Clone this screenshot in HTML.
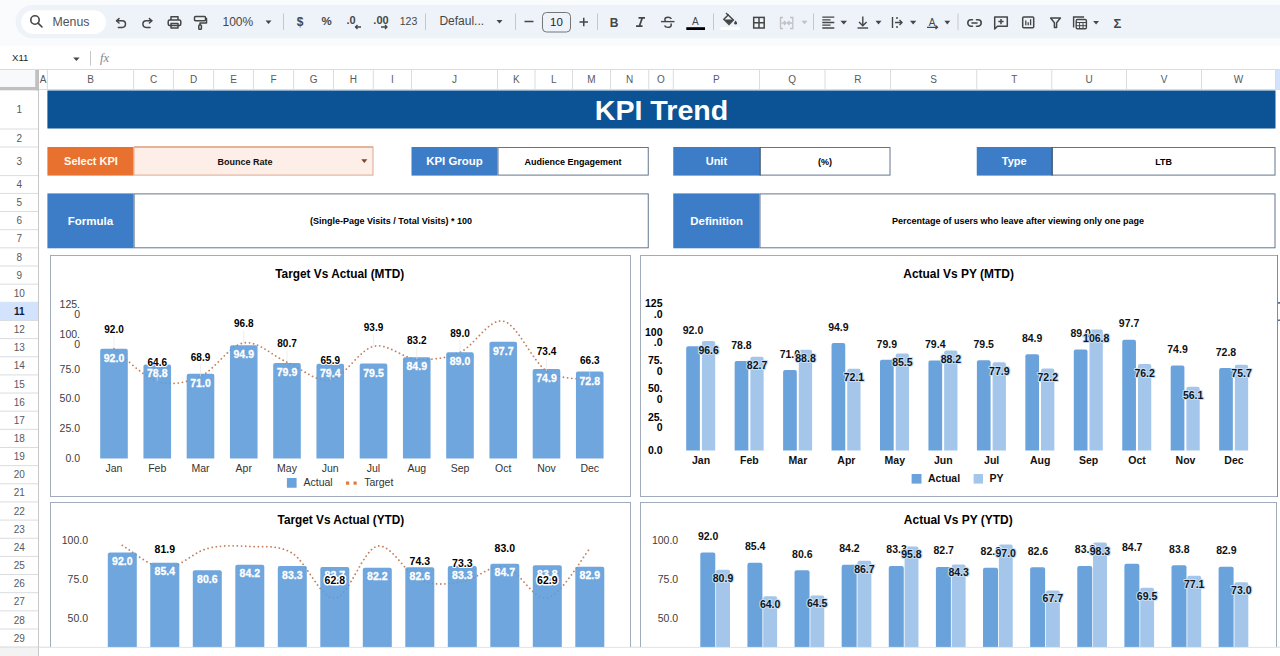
<!DOCTYPE html>
<html><head><meta charset="utf-8"><title>KPI Trend</title>
<style>
html,body{margin:0;padding:0;width:1280px;height:656px;overflow:hidden;background:#ffffff;}
svg{display:block;font-family:"Liberation Sans", sans-serif;}
</style></head><body>
<svg width="1280" height="656" viewBox="0 0 1280 656">
<rect x="0.00" y="0.00" width="1280.00" height="46.00" fill="#f9fbfd" />
<rect x="15.6" y="5" width="1300" height="33.2" rx="16.6" fill="#eef2f9"/>
<rect x="21.2" y="10.3" width="84.8" height="23.7" rx="11.85" fill="#ffffff"/>
<g fill="none" stroke="#444746" stroke-width="1.6"><circle cx="35" cy="20" r="4.2"/><line x1="38.1" y1="23.1" x2="42" y2="27" stroke-linecap="round"/></g>
<text x="52.50" y="26.00" font-size="12.3" fill="#4f5254" font-weight="normal" text-anchor="start" >Menus</text>
<g fill="none" stroke="#444746" stroke-width="1.5" stroke-linecap="round" stroke-linejoin="round"><path d="M116.6 20.8 h5.6 a3.3 3.3 0 0 1 0 6.6 h-3.8"/><path d="M119 18.6 l-2.4 2.2 l2.4 2.2"/><path d="M151.8 20.8 h-5.6 a3.3 3.3 0 0 0 0 6.6 h3.8"/><path d="M149.4 18.6 l2.4 2.2 l-2.4 2.2"/></g>
<g fill="none" stroke="#444746" stroke-width="1.5" stroke-linejoin="round"><path d="M171 20 v-3.2 h7 v3.2"/><rect x="168.2" y="20" width="12.6" height="5.6" rx="1.5"/><rect x="171" y="23.5" width="7" height="4.6"/></g>
<g fill="none" stroke="#444746" stroke-width="1.5" stroke-linejoin="round"><rect x="194.5" y="16.5" width="11" height="4.2" rx="1"/><path d="M205.5 18.6 h1 v4.3 h-6.5 v2.2"/><rect x="198.8" y="25" width="2.6" height="4.3" rx="0.8"/></g>
<text x="222.50" y="26.40" font-size="12" fill="#444746" font-weight="normal" text-anchor="start" >100%</text>
<path d="M265.5 20.5 L271.5 20.5 L268.5 24 Z" fill="#444746"/>
<line x1="283.50" y1="13.50" x2="283.50" y2="30.00" stroke="#c7c7c7" stroke-width="1" />
<text x="300.00" y="25.60" font-size="12" fill="#444746" font-weight="bold" text-anchor="middle" >$</text>
<text x="326.50" y="25.20" font-size="11.5" fill="#444746" font-weight="bold" text-anchor="middle" >%</text>
<text x="351.00" y="24.20" font-size="11" fill="#444746" font-weight="bold" text-anchor="middle" >.0</text>
<g stroke="#444746" stroke-width="1.3" fill="none"><path d="M361 27 h-6 M357.5 25 l-2 2 l2 2"/></g>
<text x="381.00" y="24.20" font-size="11" fill="#444746" font-weight="bold" text-anchor="middle" >.00</text>
<g stroke="#444746" stroke-width="1.3" fill="none"><path d="M381 27 h6 M385 25 l2 2 l-2 2"/></g>
<text x="408.50" y="25.20" font-size="10.5" fill="#444746" font-weight="normal" text-anchor="middle" >123</text>
<line x1="425.50" y1="13.50" x2="425.50" y2="30.00" stroke="#c7c7c7" stroke-width="1" />
<text x="439.40" y="25.30" font-size="12" fill="#444746" font-weight="normal" text-anchor="start" >Defaul...</text>
<path d="M496.5 20 L502.5 20 L499.5 23.5 Z" fill="#444746"/>
<line x1="515.50" y1="13.50" x2="515.50" y2="30.00" stroke="#c7c7c7" stroke-width="1" />
<line x1="524.50" y1="21.50" x2="533.50" y2="21.50" stroke="#444746" stroke-width="1.5" />
<rect x="542.5" y="12.5" width="28" height="19.5" rx="4" fill="none" stroke="#747775" stroke-width="1"/>
<text x="556.50" y="26.00" font-size="11.5" fill="#1f1f1f" font-weight="normal" text-anchor="middle" >10</text>
<path d="M579.5 22 h8.5 M583.75 17.8 v8.5" stroke="#444746" stroke-width="1.5"/>
<line x1="597.50" y1="13.50" x2="597.50" y2="30.00" stroke="#c7c7c7" stroke-width="1" />
<text x="614.00" y="26.80" font-size="12" fill="#444746" font-weight="bold" text-anchor="middle" >B</text>
<g fill="none" stroke="#444746" stroke-width="1.7"><path d="M638.5 17.9 h6.5 M636 26.2 h6.5 M642.3 17.9 l-3 8.3"/></g>
<g fill="none" stroke="#444746" stroke-width="1.4"><path d="M661 21.6 h13.5"/><path d="M671.3 18.9 c-0.5 -1.3 -1.8 -1.7 -3.3 -1.7 c-1.9 0 -3.2 1 -3.2 2.4 c0 0.6 0.3 1.2 0.8 1.6"/><path d="M670.6 23.6 c0.5 0.4 0.7 0.9 0.7 1.4 c0 1.5 -1.4 2.4 -3.3 2.4 c-1.6 0 -3 -0.6 -3.5 -1.9"/></g>
<text x="695.30" y="24.60" font-size="10" fill="#444746" font-weight="normal" text-anchor="middle" >A</text>
<rect x="686.30" y="27.20" width="18.70" height="2.80" fill="#000" />
<line x1="713.50" y1="13.50" x2="713.50" y2="30.00" stroke="#c7c7c7" stroke-width="1" />
<g fill="#444746"><path d="M726.2 13.2 l1.6 1.6"/><path d="M728.2 14.9 l5.2 5.2 l-4.4 4.4 l-5.2 -5.2 z" fill="none" stroke="#444746" stroke-width="1.4"/><path d="M724.2 19.4 h9.4 l-4.6 4.6 z"/><path d="M735.6 20.6 l1.3 2 a1.4 1.4 0 1 1 -2.6 0 z"/><path d="M726 13 l2.6 2.6" stroke="#444746" stroke-width="1.4"/></g>
<rect x="720.30" y="27.00" width="19.70" height="3.00" fill="#ffffff" />
<g fill="none" stroke="#444746" stroke-width="1.5"><rect x="753.7" y="17.4" width="10.5" height="10.6"/><path d="M759 17.4 v10.6 M753.7 22.7 h10.5"/></g>
<g fill="none" stroke="#bfc1c4" stroke-width="1.3"><path d="M783 17.5 h-2.5 v11 h2.5 M790 17.5 h2.8 v11 h-2.8"/><path d="M781.5 23 h4 M784 21 l2 2 l-2 2 M792 23 h-4 M789.5 21 l-2 2 l2 2"/></g>
<path d="M801.5 20.8 L807.5 20.8 L804.5 24.3 Z" fill="#bfc1c4"/>
<line x1="813.50" y1="13.50" x2="813.50" y2="30.00" stroke="#c7c7c7" stroke-width="1" />
<g stroke="#444746" stroke-width="1.3"><path d="M822.3 17.2 h12 M822.3 19.8 h8.3 M822.3 22.5 h12 M822.3 25.2 h8.3 M822.3 28 h12"/></g>
<path d="M840.5 20.8 L847 20.8 L843.75 24.4 Z" fill="#444746"/>
<g fill="none" stroke="#444746" stroke-width="1.4"><path d="M862.8 16.5 v9 M859 22 l3.8 3.8 l3.8 -3.8"/><path d="M857.5 28 h10.6"/></g>
<path d="M875.5 20.8 L881.5 20.8 L878.5 24.4 Z" fill="#444746"/>
<g fill="none" stroke="#444746" stroke-width="1.4"><path d="M892.5 17 v11"/><path d="M897 17 v2 M897 26 v2"/><path d="M895 22.5 h7 M899.5 20 l2.5 2.5 l-2.5 2.5"/></g>
<path d="M910 20.8 L916.3 20.8 L913.15 24.4 Z" fill="#444746"/>
<text x="932.00" y="25.50" font-size="10" fill="#444746" font-weight="normal" text-anchor="middle" >A</text>
<g fill="none" stroke="#444746" stroke-width="1.3"><path d="M927 27.3 h10.5 M935.5 25.5 l2 1.8 l-2 1.8"/></g>
<path d="M944.4 20.8 L950.2 20.8 L947.3 24.4 Z" fill="#444746"/>
<line x1="958.00" y1="13.50" x2="958.00" y2="30.00" stroke="#c7c7c7" stroke-width="1" />
<g fill="none" stroke="#444746" stroke-width="1.6" stroke-linecap="round"><path d="M972.5 19.8 h-1.5 a3.2 3.2 0 0 0 0 6.4 h1.5 M976.5 19.8 h1.5 a3.2 3.2 0 0 1 0 6.4 h-1.5 M972 23 h5"/></g>
<g fill="none" stroke="#444746" stroke-width="1.5" stroke-linejoin="round"><path d="M994.7 17 h12.6 v9.2 h-9.8 l-2.8 2.7 z"/><path d="M1001 19 v5.2 M998.4 21.6 h5.2"/></g>
<g fill="none" stroke="#444746" stroke-width="1.5"><rect x="1022.7" y="17" width="11" height="10.8" rx="1"/><path d="M1025.8 20.5 v4.8 M1028.2 22.2 v3.1 M1030.6 19.2 v6.1" stroke-width="1.3"/></g>
<g fill="none" stroke="#444746" stroke-width="1.5" stroke-linejoin="round"><path d="M1050.6 18 h9.8 l-3.8 4.7 v4.9 h-2.2 v-4.9 z"/></g>
<g fill="none" stroke="#444746" stroke-width="1.4"><path d="M1073.6 27.5 v-10.5 h10.5"/><rect x="1076.2" y="19.5" width="10.2" height="9.3" rx="1.2"/><path d="M1076.2 22.5 h10.2 M1076.2 25.7 h10.2 M1079.6 22.5 v6.3 M1083 22.5 v6.3" stroke-width="1"/></g>
<path d="M1093.2 21 L1099 21 L1096.1 24.4 Z" fill="#444746"/>
<text x="1117.40" y="27.60" font-size="13" fill="#444746" font-weight="bold" text-anchor="middle" >Σ</text>
<rect x="0.00" y="46.00" width="1280.00" height="23.00" fill="#ffffff" />
<text x="12.00" y="61.00" font-size="9.6" fill="#1f1f1f" font-weight="normal" text-anchor="start" >X11</text>
<path d="M73.2 57.5 L79.6 57.5 L76.4 61 Z" fill="#444746"/>
<line x1="90.50" y1="51.00" x2="90.50" y2="65.50" stroke="#c7c7c7" stroke-width="1" />
<text x="100.00" y="62.00" font-size="12.5" fill="#80868b" font-weight="normal" text-anchor="start" font-style="italic" font-family="Liberation Serif">fx</text>
<rect x="0.00" y="69.00" width="1280.00" height="587.00" fill="#ffffff" />
<rect x="39.00" y="69.00" width="1241.00" height="20.50" fill="#ffffff" />
<rect x="1275.50" y="69.00" width="4.50" height="20.50" fill="#d3e3fd" />
<line x1="0.00" y1="69.50" x2="1280.00" y2="69.50" stroke="#dadce0" stroke-width="1" />
<line x1="47.40" y1="69.00" x2="47.40" y2="89.50" stroke="#dadce0" stroke-width="1" />
<text x="43.20" y="83.10" font-size="10" fill="#575a5e" font-weight="normal" text-anchor="middle" >A</text>
<line x1="133.60" y1="69.00" x2="133.60" y2="89.50" stroke="#dadce0" stroke-width="1" />
<text x="90.50" y="83.10" font-size="10" fill="#575a5e" font-weight="normal" text-anchor="middle" >B</text>
<line x1="173.40" y1="69.00" x2="173.40" y2="89.50" stroke="#dadce0" stroke-width="1" />
<text x="153.50" y="83.10" font-size="10" fill="#575a5e" font-weight="normal" text-anchor="middle" >C</text>
<line x1="213.60" y1="69.00" x2="213.60" y2="89.50" stroke="#dadce0" stroke-width="1" />
<text x="193.50" y="83.10" font-size="10" fill="#575a5e" font-weight="normal" text-anchor="middle" >D</text>
<line x1="253.40" y1="69.00" x2="253.40" y2="89.50" stroke="#dadce0" stroke-width="1" />
<text x="233.50" y="83.10" font-size="10" fill="#575a5e" font-weight="normal" text-anchor="middle" >E</text>
<line x1="293.60" y1="69.00" x2="293.60" y2="89.50" stroke="#dadce0" stroke-width="1" />
<text x="273.50" y="83.10" font-size="10" fill="#575a5e" font-weight="normal" text-anchor="middle" >F</text>
<line x1="333.50" y1="69.00" x2="333.50" y2="89.50" stroke="#dadce0" stroke-width="1" />
<text x="313.55" y="83.10" font-size="10" fill="#575a5e" font-weight="normal" text-anchor="middle" >G</text>
<line x1="373.30" y1="69.00" x2="373.30" y2="89.50" stroke="#dadce0" stroke-width="1" />
<text x="353.40" y="83.10" font-size="10" fill="#575a5e" font-weight="normal" text-anchor="middle" >H</text>
<line x1="411.50" y1="69.00" x2="411.50" y2="89.50" stroke="#dadce0" stroke-width="1" />
<text x="392.40" y="83.10" font-size="10" fill="#575a5e" font-weight="normal" text-anchor="middle" >I</text>
<line x1="497.50" y1="69.00" x2="497.50" y2="89.50" stroke="#dadce0" stroke-width="1" />
<text x="454.50" y="83.10" font-size="10" fill="#575a5e" font-weight="normal" text-anchor="middle" >J</text>
<line x1="535.00" y1="69.00" x2="535.00" y2="89.50" stroke="#dadce0" stroke-width="1" />
<text x="516.25" y="83.10" font-size="10" fill="#575a5e" font-weight="normal" text-anchor="middle" >K</text>
<line x1="572.50" y1="69.00" x2="572.50" y2="89.50" stroke="#dadce0" stroke-width="1" />
<text x="553.75" y="83.10" font-size="10" fill="#575a5e" font-weight="normal" text-anchor="middle" >L</text>
<line x1="610.50" y1="69.00" x2="610.50" y2="89.50" stroke="#dadce0" stroke-width="1" />
<text x="591.50" y="83.10" font-size="10" fill="#575a5e" font-weight="normal" text-anchor="middle" >M</text>
<line x1="648.75" y1="69.00" x2="648.75" y2="89.50" stroke="#dadce0" stroke-width="1" />
<text x="629.62" y="83.10" font-size="10" fill="#575a5e" font-weight="normal" text-anchor="middle" >N</text>
<line x1="673.25" y1="69.00" x2="673.25" y2="89.50" stroke="#dadce0" stroke-width="1" />
<text x="661.00" y="83.10" font-size="10" fill="#575a5e" font-weight="normal" text-anchor="middle" >O</text>
<line x1="759.50" y1="69.00" x2="759.50" y2="89.50" stroke="#dadce0" stroke-width="1" />
<text x="716.38" y="83.10" font-size="10" fill="#575a5e" font-weight="normal" text-anchor="middle" >P</text>
<line x1="825.00" y1="69.00" x2="825.00" y2="89.50" stroke="#dadce0" stroke-width="1" />
<text x="792.25" y="83.10" font-size="10" fill="#575a5e" font-weight="normal" text-anchor="middle" >Q</text>
<line x1="890.50" y1="69.00" x2="890.50" y2="89.50" stroke="#dadce0" stroke-width="1" />
<text x="857.75" y="83.10" font-size="10" fill="#575a5e" font-weight="normal" text-anchor="middle" >R</text>
<line x1="976.75" y1="69.00" x2="976.75" y2="89.50" stroke="#dadce0" stroke-width="1" />
<text x="933.62" y="83.10" font-size="10" fill="#575a5e" font-weight="normal" text-anchor="middle" >S</text>
<line x1="1051.75" y1="69.00" x2="1051.75" y2="89.50" stroke="#dadce0" stroke-width="1" />
<text x="1014.25" y="83.10" font-size="10" fill="#575a5e" font-weight="normal" text-anchor="middle" >T</text>
<line x1="1126.50" y1="69.00" x2="1126.50" y2="89.50" stroke="#dadce0" stroke-width="1" />
<text x="1089.12" y="83.10" font-size="10" fill="#575a5e" font-weight="normal" text-anchor="middle" >U</text>
<line x1="1201.50" y1="69.00" x2="1201.50" y2="89.50" stroke="#dadce0" stroke-width="1" />
<text x="1164.00" y="83.10" font-size="10" fill="#575a5e" font-weight="normal" text-anchor="middle" >V</text>
<line x1="1275.50" y1="69.00" x2="1275.50" y2="89.50" stroke="#dadce0" stroke-width="1" />
<text x="1238.50" y="83.10" font-size="10" fill="#575a5e" font-weight="normal" text-anchor="middle" >W</text>
<line x1="1350.00" y1="69.00" x2="1350.00" y2="89.50" stroke="#dadce0" stroke-width="1" />
<text x="1312.75" y="83.10" font-size="10" fill="#575a5e" font-weight="normal" text-anchor="middle" >X</text>
<rect x="0.00" y="89.50" width="38.50" height="566.50" fill="#ffffff" />
<line x1="0.00" y1="129.00" x2="38.50" y2="129.00" stroke="#dadce0" stroke-width="1" />
<text x="19.20" y="113.35" font-size="10" fill="#575a5e" font-weight="normal" text-anchor="middle" >1</text>
<line x1="0.00" y1="147.00" x2="38.50" y2="147.00" stroke="#dadce0" stroke-width="1" />
<text x="19.20" y="141.60" font-size="10" fill="#575a5e" font-weight="normal" text-anchor="middle" >2</text>
<line x1="0.00" y1="175.60" x2="38.50" y2="175.60" stroke="#dadce0" stroke-width="1" />
<text x="19.20" y="164.90" font-size="10" fill="#575a5e" font-weight="normal" text-anchor="middle" >3</text>
<line x1="0.00" y1="193.40" x2="38.50" y2="193.40" stroke="#dadce0" stroke-width="1" />
<text x="19.20" y="188.10" font-size="10" fill="#575a5e" font-weight="normal" text-anchor="middle" >4</text>
<line x1="0.00" y1="211.55" x2="38.50" y2="211.55" stroke="#dadce0" stroke-width="1" />
<text x="19.20" y="206.08" font-size="10" fill="#575a5e" font-weight="normal" text-anchor="middle" >5</text>
<line x1="0.00" y1="229.70" x2="38.50" y2="229.70" stroke="#dadce0" stroke-width="1" />
<text x="19.20" y="224.22" font-size="10" fill="#575a5e" font-weight="normal" text-anchor="middle" >6</text>
<line x1="0.00" y1="247.85" x2="38.50" y2="247.85" stroke="#dadce0" stroke-width="1" />
<text x="19.20" y="242.38" font-size="10" fill="#575a5e" font-weight="normal" text-anchor="middle" >7</text>
<line x1="0.00" y1="266.00" x2="38.50" y2="266.00" stroke="#dadce0" stroke-width="1" />
<text x="19.20" y="260.53" font-size="10" fill="#575a5e" font-weight="normal" text-anchor="middle" >8</text>
<line x1="0.00" y1="284.15" x2="38.50" y2="284.15" stroke="#dadce0" stroke-width="1" />
<text x="19.20" y="278.68" font-size="10" fill="#575a5e" font-weight="normal" text-anchor="middle" >9</text>
<line x1="0.00" y1="302.30" x2="38.50" y2="302.30" stroke="#dadce0" stroke-width="1" />
<text x="19.20" y="296.82" font-size="10" fill="#575a5e" font-weight="normal" text-anchor="middle" >10</text>
<rect x="0.00" y="302.30" width="38.50" height="18.15" fill="#d3e3fd" />
<line x1="0.00" y1="320.45" x2="38.50" y2="320.45" stroke="#dadce0" stroke-width="1" />
<text x="19.20" y="314.97" font-size="10" fill="#0b1e3f" font-weight="bold" text-anchor="middle" >11</text>
<line x1="0.00" y1="338.60" x2="38.50" y2="338.60" stroke="#dadce0" stroke-width="1" />
<text x="19.20" y="333.12" font-size="10" fill="#575a5e" font-weight="normal" text-anchor="middle" >12</text>
<line x1="0.00" y1="356.75" x2="38.50" y2="356.75" stroke="#dadce0" stroke-width="1" />
<text x="19.20" y="351.27" font-size="10" fill="#575a5e" font-weight="normal" text-anchor="middle" >13</text>
<line x1="0.00" y1="374.90" x2="38.50" y2="374.90" stroke="#dadce0" stroke-width="1" />
<text x="19.20" y="369.42" font-size="10" fill="#575a5e" font-weight="normal" text-anchor="middle" >14</text>
<line x1="0.00" y1="393.05" x2="38.50" y2="393.05" stroke="#dadce0" stroke-width="1" />
<text x="19.20" y="387.57" font-size="10" fill="#575a5e" font-weight="normal" text-anchor="middle" >15</text>
<line x1="0.00" y1="411.20" x2="38.50" y2="411.20" stroke="#dadce0" stroke-width="1" />
<text x="19.20" y="405.72" font-size="10" fill="#575a5e" font-weight="normal" text-anchor="middle" >16</text>
<line x1="0.00" y1="429.35" x2="38.50" y2="429.35" stroke="#dadce0" stroke-width="1" />
<text x="19.20" y="423.87" font-size="10" fill="#575a5e" font-weight="normal" text-anchor="middle" >17</text>
<line x1="0.00" y1="447.50" x2="38.50" y2="447.50" stroke="#dadce0" stroke-width="1" />
<text x="19.20" y="442.02" font-size="10" fill="#575a5e" font-weight="normal" text-anchor="middle" >18</text>
<line x1="0.00" y1="465.65" x2="38.50" y2="465.65" stroke="#dadce0" stroke-width="1" />
<text x="19.20" y="460.17" font-size="10" fill="#575a5e" font-weight="normal" text-anchor="middle" >19</text>
<line x1="0.00" y1="483.80" x2="38.50" y2="483.80" stroke="#dadce0" stroke-width="1" />
<text x="19.20" y="478.32" font-size="10" fill="#575a5e" font-weight="normal" text-anchor="middle" >20</text>
<line x1="0.00" y1="501.95" x2="38.50" y2="501.95" stroke="#dadce0" stroke-width="1" />
<text x="19.20" y="496.47" font-size="10" fill="#575a5e" font-weight="normal" text-anchor="middle" >21</text>
<line x1="0.00" y1="520.10" x2="38.50" y2="520.10" stroke="#dadce0" stroke-width="1" />
<text x="19.20" y="514.62" font-size="10" fill="#575a5e" font-weight="normal" text-anchor="middle" >22</text>
<line x1="0.00" y1="538.25" x2="38.50" y2="538.25" stroke="#dadce0" stroke-width="1" />
<text x="19.20" y="532.77" font-size="10" fill="#575a5e" font-weight="normal" text-anchor="middle" >23</text>
<line x1="0.00" y1="556.40" x2="38.50" y2="556.40" stroke="#dadce0" stroke-width="1" />
<text x="19.20" y="550.92" font-size="10" fill="#575a5e" font-weight="normal" text-anchor="middle" >24</text>
<line x1="0.00" y1="574.55" x2="38.50" y2="574.55" stroke="#dadce0" stroke-width="1" />
<text x="19.20" y="569.07" font-size="10" fill="#575a5e" font-weight="normal" text-anchor="middle" >25</text>
<line x1="0.00" y1="592.70" x2="38.50" y2="592.70" stroke="#dadce0" stroke-width="1" />
<text x="19.20" y="587.22" font-size="10" fill="#575a5e" font-weight="normal" text-anchor="middle" >26</text>
<line x1="0.00" y1="610.85" x2="38.50" y2="610.85" stroke="#dadce0" stroke-width="1" />
<text x="19.20" y="605.37" font-size="10" fill="#575a5e" font-weight="normal" text-anchor="middle" >27</text>
<line x1="0.00" y1="629.00" x2="38.50" y2="629.00" stroke="#dadce0" stroke-width="1" />
<text x="19.20" y="623.52" font-size="10" fill="#575a5e" font-weight="normal" text-anchor="middle" >28</text>
<line x1="0.00" y1="647.15" x2="38.50" y2="647.15" stroke="#dadce0" stroke-width="1" />
<text x="19.20" y="641.67" font-size="10" fill="#575a5e" font-weight="normal" text-anchor="middle" >29</text>
<rect x="0.00" y="647.20" width="38.50" height="8.80" fill="#f5f5f5" />
<line x1="0.00" y1="647.20" x2="1280.00" y2="647.20" stroke="#e0e0e0" stroke-width="1" />
<line x1="38.50" y1="89.50" x2="38.50" y2="656.00" stroke="#c7c7c7" stroke-width="1" />
<line x1="0.00" y1="89.50" x2="1280.00" y2="89.50" stroke="#dadce0" stroke-width="1" />
<rect x="0.00" y="70.00" width="35.20" height="17.00" fill="#f8f9fa" />
<rect x="35.20" y="70.00" width="3.80" height="20.30" fill="#c0c0c0" />
<rect x="0.00" y="87.00" width="39.00" height="3.30" fill="#c0c0c0" />
<rect x="47.40" y="90.50" width="1228.10" height="38.00" fill="#0b5394" />
<text x="661.50" y="119.90" font-size="28" fill="#ffffff" font-weight="bold" text-anchor="middle"  textLength="133.5" lengthAdjust="spacingAndGlyphs">KPI Trend</text>
<rect x="47.40" y="147.00" width="86.20" height="28.60" fill="#e8712f" />
<text x="91.00" y="165.40" font-size="11" fill="#fffaf0" font-weight="bold" text-anchor="middle" >Select KPI</text>
<rect x="134" y="147.5" width="239" height="27.599999999999994" fill="#fdeee7" stroke="#d9a992" stroke-width="1"/>
<line x1="134.00" y1="147.00" x2="373.30" y2="147.00" stroke="#e4b39c" stroke-width="2" />
<text x="245.00" y="164.70" font-size="9" fill="#111" font-weight="bold" text-anchor="middle" >Bounce Rate</text>
<path d="M361.3 159.2 h6 l-3 3.8 z" fill="#7a4428"/>
<rect x="411.50" y="147.00" width="86.00" height="28.60" fill="#3d7dc8" />
<text x="454.50" y="165.40" font-size="11.3" fill="#ffffff" font-weight="bold" text-anchor="middle"  textLength="56.5" lengthAdjust="spacingAndGlyphs">KPI Group</text>
<rect x="498.00" y="147.50" width="150.25" height="27.60" fill="#ffffff" stroke="#62758c" stroke-width="1"/>
<text x="573.12" y="164.54" font-size="9" fill="#000000" font-weight="bold" text-anchor="middle" >Audience Engagement</text>
<rect x="673.25" y="147.00" width="86.25" height="28.60" fill="#3d7dc8" />
<text x="716.40" y="165.40" font-size="11" fill="#ffffff" font-weight="bold" text-anchor="middle" >Unit</text>
<rect x="760.00" y="147.50" width="130.00" height="27.60" fill="#ffffff" stroke="#62758c" stroke-width="1"/>
<text x="825.00" y="164.54" font-size="9" fill="#000000" font-weight="bold" text-anchor="middle" >(%)</text>
<line x1="760.00" y1="147.00" x2="760.00" y2="175.60" stroke="#25405f" stroke-width="1" />
<rect x="976.75" y="147.00" width="75.00" height="28.60" fill="#3d7dc8" />
<text x="1014.20" y="165.40" font-size="11" fill="#ffffff" font-weight="bold" text-anchor="middle" >Type</text>
<rect x="1052.25" y="147.50" width="222.75" height="27.60" fill="#ffffff" stroke="#62758c" stroke-width="1"/>
<text x="1163.62" y="164.54" font-size="9" fill="#000000" font-weight="bold" text-anchor="middle" >LTB</text>
<line x1="1052.00" y1="147.00" x2="1052.00" y2="175.60" stroke="#25405f" stroke-width="1" />
<rect x="47.40" y="193.40" width="86.20" height="54.90" fill="#3d7dc8" />
<text x="90.50" y="225.20" font-size="11.5" fill="#ffffff" font-weight="bold" text-anchor="middle" >Formula</text>
<rect x="134.10" y="193.90" width="514.15" height="53.90" fill="#ffffff" stroke="#62758c" stroke-width="1"/>
<text x="391.00" y="224.09" font-size="9" fill="#000000" font-weight="bold" text-anchor="middle" >(Single-Page Visits / Total Visits) * 100</text>
<rect x="673.25" y="193.40" width="86.25" height="54.90" fill="#3d7dc8" />
<text x="716.60" y="225.20" font-size="11.3" fill="#ffffff" font-weight="bold" text-anchor="middle"  textLength="52.5" lengthAdjust="spacingAndGlyphs">Definition</text>
<rect x="760.00" y="193.90" width="515.00" height="53.90" fill="#ffffff" stroke="#62758c" stroke-width="1"/>
<text x="1018.00" y="224.09" font-size="9" fill="#000000" font-weight="bold" text-anchor="middle" >Percentage of users who leave after viewing only one page</text>
<rect x="50.50" y="255.50" width="580.00" height="241.00" fill="#ffffff" stroke="#a0acbb" stroke-width="1"/>
<text x="339.70" y="277.50" font-size="12.8" fill="#000" font-weight="bold" text-anchor="middle"  textLength="129" lengthAdjust="spacingAndGlyphs">Target Vs Actual (MTD)</text>
<text x="80.00" y="462.20" font-size="10.5" fill="#404040" font-weight="normal" text-anchor="end" >0.0</text>
<text x="80.00" y="432.33" font-size="10.5" fill="#404040" font-weight="normal" text-anchor="end" >25.0</text>
<text x="80.00" y="402.45" font-size="10.5" fill="#404040" font-weight="normal" text-anchor="end" >50.0</text>
<text x="80.00" y="372.58" font-size="10.5" fill="#404040" font-weight="normal" text-anchor="end" >75.0</text>
<text x="80.00" y="337.60" font-size="10.5" fill="#404040" font-weight="normal" text-anchor="end" >100.</text>
<text x="80.00" y="348.00" font-size="10.5" fill="#404040" font-weight="normal" text-anchor="end" >0</text>
<text x="80.00" y="307.73" font-size="10.5" fill="#404040" font-weight="normal" text-anchor="end" >125.</text>
<text x="80.00" y="318.12" font-size="10.5" fill="#404040" font-weight="normal" text-anchor="end" >0</text>
<path d="M114.00 348.66 C121.21 354.12 142.83 376.80 157.25 381.40 C171.67 386.00 186.08 382.68 200.50 376.26 C214.92 369.85 229.33 345.27 243.75 342.92 C258.17 340.57 272.58 356.01 287.00 362.16 C301.42 368.32 315.83 382.48 330.25 379.85 C344.67 377.22 359.08 349.84 373.50 346.39 C387.92 342.94 402.33 358.20 416.75 359.18 C431.17 360.15 445.58 358.58 460.00 352.25 C474.42 345.91 488.83 318.07 503.25 321.18 C517.67 324.28 532.08 361.19 546.50 370.89 C560.92 380.59 582.54 377.96 589.75 379.37" fill="none" stroke="#c47e58" stroke-width="1.8" stroke-dasharray="0.01 4.2" stroke-linecap="round"/>
<path d="M100.20 458.60 V350.66 Q100.20 348.66 102.20 348.66 H125.80 Q127.80 348.66 127.80 350.66 V458.60 Z" fill="#5f9cd9" fill-opacity="0.9"/>
<path d="M143.45 458.60 V366.43 Q143.45 364.43 145.45 364.43 H169.05 Q171.05 364.43 171.05 366.43 V458.60 Z" fill="#5f9cd9" fill-opacity="0.9"/>
<path d="M186.70 458.60 V375.75 Q186.70 373.75 188.70 373.75 H212.30 Q214.30 373.75 214.30 375.75 V458.60 Z" fill="#5f9cd9" fill-opacity="0.9"/>
<path d="M229.95 458.60 V347.19 Q229.95 345.19 231.95 345.19 H255.55 Q257.55 345.19 257.55 347.19 V458.60 Z" fill="#5f9cd9" fill-opacity="0.9"/>
<path d="M273.20 458.60 V365.12 Q273.20 363.12 275.20 363.12 H298.80 Q300.80 363.12 300.80 365.12 V458.60 Z" fill="#5f9cd9" fill-opacity="0.9"/>
<path d="M316.45 458.60 V365.72 Q316.45 363.72 318.45 363.72 H342.05 Q344.05 363.72 344.05 365.72 V458.60 Z" fill="#5f9cd9" fill-opacity="0.9"/>
<path d="M359.70 458.60 V365.60 Q359.70 363.60 361.70 363.60 H385.30 Q387.30 363.60 387.30 365.60 V458.60 Z" fill="#5f9cd9" fill-opacity="0.9"/>
<path d="M402.95 458.60 V359.14 Q402.95 357.14 404.95 357.14 H428.55 Q430.55 357.14 430.55 359.14 V458.60 Z" fill="#5f9cd9" fill-opacity="0.9"/>
<path d="M446.20 458.60 V354.25 Q446.20 352.25 448.20 352.25 H471.80 Q473.80 352.25 473.80 354.25 V458.60 Z" fill="#5f9cd9" fill-opacity="0.9"/>
<path d="M489.45 458.60 V343.85 Q489.45 341.85 491.45 341.85 H515.05 Q517.05 341.85 517.05 343.85 V458.60 Z" fill="#5f9cd9" fill-opacity="0.9"/>
<path d="M532.70 458.60 V371.09 Q532.70 369.09 534.70 369.09 H558.30 Q560.30 369.09 560.30 371.09 V458.60 Z" fill="#5f9cd9" fill-opacity="0.9"/>
<path d="M575.95 458.60 V373.60 Q575.95 371.60 577.95 371.60 H601.55 Q603.55 371.60 603.55 373.60 V458.60 Z" fill="#5f9cd9" fill-opacity="0.9"/>
<text x="114.00" y="361.56" font-size="10.5" fill="#ffffff" font-weight="bold" text-anchor="middle" stroke="#ffffff" stroke-width="0.3">92.0</text>
<text x="157.25" y="377.33" font-size="10.5" fill="#ffffff" font-weight="bold" text-anchor="middle" stroke="#ffffff" stroke-width="0.3">78.8</text>
<text x="200.50" y="386.65" font-size="10.5" fill="#ffffff" font-weight="bold" text-anchor="middle" stroke="#ffffff" stroke-width="0.3">71.0</text>
<text x="243.75" y="358.09" font-size="10.5" fill="#ffffff" font-weight="bold" text-anchor="middle" stroke="#ffffff" stroke-width="0.3">94.9</text>
<text x="287.00" y="376.02" font-size="10.5" fill="#ffffff" font-weight="bold" text-anchor="middle" stroke="#ffffff" stroke-width="0.3">79.9</text>
<text x="330.25" y="376.62" font-size="10.5" fill="#ffffff" font-weight="bold" text-anchor="middle" stroke="#ffffff" stroke-width="0.3">79.4</text>
<text x="373.50" y="376.50" font-size="10.5" fill="#ffffff" font-weight="bold" text-anchor="middle" stroke="#ffffff" stroke-width="0.3">79.5</text>
<text x="416.75" y="370.04" font-size="10.5" fill="#ffffff" font-weight="bold" text-anchor="middle" stroke="#ffffff" stroke-width="0.3">84.9</text>
<text x="460.00" y="365.14" font-size="10.5" fill="#ffffff" font-weight="bold" text-anchor="middle" stroke="#ffffff" stroke-width="0.3">89.0</text>
<text x="503.25" y="354.75" font-size="10.5" fill="#ffffff" font-weight="bold" text-anchor="middle" stroke="#ffffff" stroke-width="0.3">97.7</text>
<text x="546.50" y="381.99" font-size="10.5" fill="#ffffff" font-weight="bold" text-anchor="middle" stroke="#ffffff" stroke-width="0.3">74.9</text>
<text x="589.75" y="384.50" font-size="10.5" fill="#ffffff" font-weight="bold" text-anchor="middle" stroke="#ffffff" stroke-width="0.3">72.8</text>
<line x1="114.00" y1="336.66" x2="114.00" y2="348.66" stroke="#e3e3e3" stroke-width="0.6" />
<text x="114.00" y="333.16" font-size="10" fill="#000" font-weight="bold" text-anchor="middle" stroke="#ffffff" stroke-width="2.2" paint-order="stroke" stroke-linejoin="round">92.0</text>
<line x1="157.25" y1="369.40" x2="157.25" y2="381.40" stroke="#e3e3e3" stroke-width="0.6" />
<text x="157.25" y="365.90" font-size="10" fill="#000" font-weight="bold" text-anchor="middle" stroke="#ffffff" stroke-width="2.2" paint-order="stroke" stroke-linejoin="round">64.6</text>
<line x1="200.50" y1="364.26" x2="200.50" y2="376.26" stroke="#e3e3e3" stroke-width="0.6" />
<text x="200.50" y="360.76" font-size="10" fill="#000" font-weight="bold" text-anchor="middle" stroke="#ffffff" stroke-width="2.2" paint-order="stroke" stroke-linejoin="round">68.9</text>
<line x1="243.75" y1="330.92" x2="243.75" y2="342.92" stroke="#e3e3e3" stroke-width="0.6" />
<text x="243.75" y="327.42" font-size="10" fill="#000" font-weight="bold" text-anchor="middle" stroke="#ffffff" stroke-width="2.2" paint-order="stroke" stroke-linejoin="round">96.8</text>
<line x1="287.00" y1="350.16" x2="287.00" y2="362.16" stroke="#e3e3e3" stroke-width="0.6" />
<text x="287.00" y="346.66" font-size="10" fill="#000" font-weight="bold" text-anchor="middle" stroke="#ffffff" stroke-width="2.2" paint-order="stroke" stroke-linejoin="round">80.7</text>
<line x1="330.25" y1="367.85" x2="330.25" y2="379.85" stroke="#e3e3e3" stroke-width="0.6" />
<text x="330.25" y="364.35" font-size="10" fill="#000" font-weight="bold" text-anchor="middle" stroke="#ffffff" stroke-width="2.2" paint-order="stroke" stroke-linejoin="round">65.9</text>
<line x1="373.50" y1="334.39" x2="373.50" y2="346.39" stroke="#e3e3e3" stroke-width="0.6" />
<text x="373.50" y="330.89" font-size="10" fill="#000" font-weight="bold" text-anchor="middle" stroke="#ffffff" stroke-width="2.2" paint-order="stroke" stroke-linejoin="round">93.9</text>
<line x1="416.75" y1="347.18" x2="416.75" y2="359.18" stroke="#e3e3e3" stroke-width="0.6" />
<text x="416.75" y="343.68" font-size="10" fill="#000" font-weight="bold" text-anchor="middle" stroke="#ffffff" stroke-width="2.2" paint-order="stroke" stroke-linejoin="round">83.2</text>
<line x1="460.00" y1="340.25" x2="460.00" y2="352.25" stroke="#e3e3e3" stroke-width="0.6" />
<text x="460.00" y="336.75" font-size="10" fill="#000" font-weight="bold" text-anchor="middle" stroke="#ffffff" stroke-width="2.2" paint-order="stroke" stroke-linejoin="round">89.0</text>
<line x1="546.50" y1="358.89" x2="546.50" y2="370.89" stroke="#e3e3e3" stroke-width="0.6" />
<text x="546.50" y="355.39" font-size="10" fill="#000" font-weight="bold" text-anchor="middle" stroke="#ffffff" stroke-width="2.2" paint-order="stroke" stroke-linejoin="round">73.4</text>
<line x1="589.75" y1="367.37" x2="589.75" y2="379.37" stroke="#e3e3e3" stroke-width="0.6" />
<text x="589.75" y="363.87" font-size="10" fill="#000" font-weight="bold" text-anchor="middle" stroke="#ffffff" stroke-width="2.2" paint-order="stroke" stroke-linejoin="round">66.3</text>
<text x="114.00" y="471.90" font-size="10.5" fill="#333" font-weight="normal" text-anchor="middle" >Jan</text>
<text x="157.25" y="471.90" font-size="10.5" fill="#333" font-weight="normal" text-anchor="middle" >Feb</text>
<text x="200.50" y="471.90" font-size="10.5" fill="#333" font-weight="normal" text-anchor="middle" >Mar</text>
<text x="243.75" y="471.90" font-size="10.5" fill="#333" font-weight="normal" text-anchor="middle" >Apr</text>
<text x="287.00" y="471.90" font-size="10.5" fill="#333" font-weight="normal" text-anchor="middle" >May</text>
<text x="330.25" y="471.90" font-size="10.5" fill="#333" font-weight="normal" text-anchor="middle" >Jun</text>
<text x="373.50" y="471.90" font-size="10.5" fill="#333" font-weight="normal" text-anchor="middle" >Jul</text>
<text x="416.75" y="471.90" font-size="10.5" fill="#333" font-weight="normal" text-anchor="middle" >Aug</text>
<text x="460.00" y="471.90" font-size="10.5" fill="#333" font-weight="normal" text-anchor="middle" >Sep</text>
<text x="503.25" y="471.90" font-size="10.5" fill="#333" font-weight="normal" text-anchor="middle" >Oct</text>
<text x="546.50" y="471.90" font-size="10.5" fill="#333" font-weight="normal" text-anchor="middle" >Nov</text>
<text x="589.75" y="471.90" font-size="10.5" fill="#333" font-weight="normal" text-anchor="middle" >Dec</text>
<rect x="286.90" y="478.00" width="9.70" height="9.75" fill="#6aa3dc" />
<text x="303.50" y="486.00" font-size="10.5" fill="#333" font-weight="normal" text-anchor="start" >Actual</text>
<rect x="346.00" y="481.50" width="3.20" height="3.20" fill="#e07b39" />
<rect x="353.50" y="481.50" width="3.20" height="3.20" fill="#e07b39" />
<text x="364.20" y="486.00" font-size="10.5" fill="#333" font-weight="normal" text-anchor="start" >Target</text>
<rect x="640.50" y="255.50" width="637.00" height="241.00" fill="#ffffff" stroke="#a0acbb" stroke-width="1"/>
<text x="958.60" y="277.50" font-size="12.8" fill="#000" font-weight="bold" text-anchor="middle"  textLength="110.7" lengthAdjust="spacingAndGlyphs">Actual Vs PY (MTD)</text>
<text x="662.50" y="454.00" font-size="10.5" fill="#000" font-weight="bold" text-anchor="end" >0.0</text>
<text x="662.50" y="420.57" font-size="10.5" fill="#000" font-weight="bold" text-anchor="end" >25.</text>
<text x="662.50" y="431.27" font-size="10.5" fill="#000" font-weight="bold" text-anchor="end" >0</text>
<text x="662.50" y="392.25" font-size="10.5" fill="#000" font-weight="bold" text-anchor="end" >50.</text>
<text x="662.50" y="402.95" font-size="10.5" fill="#000" font-weight="bold" text-anchor="end" >0</text>
<text x="662.50" y="363.92" font-size="10.5" fill="#000" font-weight="bold" text-anchor="end" >75.</text>
<text x="662.50" y="374.62" font-size="10.5" fill="#000" font-weight="bold" text-anchor="end" >0</text>
<text x="662.50" y="335.60" font-size="10.5" fill="#000" font-weight="bold" text-anchor="end" >100</text>
<text x="662.50" y="346.30" font-size="10.5" fill="#000" font-weight="bold" text-anchor="end" >.0</text>
<text x="662.50" y="307.27" font-size="10.5" fill="#000" font-weight="bold" text-anchor="end" >125</text>
<text x="662.50" y="317.97" font-size="10.5" fill="#000" font-weight="bold" text-anchor="end" >.0</text>
<path d="M686.20 450.40 V348.16 Q686.20 346.16 688.20 346.16 H697.90 Q699.90 346.16 699.90 348.16 V450.40 Z" fill="#6aa3dc"/>
<path d="M701.90 450.40 V342.95 Q701.90 340.95 703.90 340.95 H713.20 Q715.20 340.95 715.20 342.95 V450.40 Z" fill="#a3c6ea"/>
<path d="M734.65 450.40 V363.12 Q734.65 361.12 736.65 361.12 H746.35 Q748.35 361.12 748.35 363.12 V450.40 Z" fill="#6aa3dc"/>
<path d="M750.35 450.40 V358.70 Q750.35 356.70 752.35 356.70 H761.65 Q763.65 356.70 763.65 358.70 V450.40 Z" fill="#a3c6ea"/>
<path d="M783.10 450.40 V371.96 Q783.10 369.96 785.10 369.96 H794.80 Q796.80 369.96 796.80 371.96 V450.40 Z" fill="#6aa3dc"/>
<path d="M798.80 450.40 V351.79 Q798.80 349.79 800.80 349.79 H810.10 Q812.10 349.79 812.10 351.79 V450.40 Z" fill="#a3c6ea"/>
<path d="M831.55 450.40 V344.88 Q831.55 342.88 833.55 342.88 H843.25 Q845.25 342.88 845.25 344.88 V450.40 Z" fill="#6aa3dc"/>
<path d="M847.25 450.40 V370.71 Q847.25 368.71 849.25 368.71 H858.55 Q860.55 368.71 860.55 370.71 V450.40 Z" fill="#a3c6ea"/>
<path d="M880.00 450.40 V361.87 Q880.00 359.87 882.00 359.87 H891.70 Q893.70 359.87 893.70 361.87 V450.40 Z" fill="#6aa3dc"/>
<path d="M895.70 450.40 V355.53 Q895.70 353.53 897.70 353.53 H907.00 Q909.00 353.53 909.00 355.53 V450.40 Z" fill="#a3c6ea"/>
<path d="M928.45 450.40 V362.44 Q928.45 360.44 930.45 360.44 H940.15 Q942.15 360.44 942.15 362.44 V450.40 Z" fill="#6aa3dc"/>
<path d="M944.15 450.40 V352.47 Q944.15 350.47 946.15 350.47 H955.45 Q957.45 350.47 957.45 352.47 V450.40 Z" fill="#a3c6ea"/>
<path d="M976.90 450.40 V362.33 Q976.90 360.33 978.90 360.33 H988.60 Q990.60 360.33 990.60 362.33 V450.40 Z" fill="#6aa3dc"/>
<path d="M992.60 450.40 V364.14 Q992.60 362.14 994.60 362.14 H1003.90 Q1005.90 362.14 1005.90 364.14 V450.40 Z" fill="#a3c6ea"/>
<path d="M1025.35 450.40 V356.21 Q1025.35 354.21 1027.35 354.21 H1037.05 Q1039.05 354.21 1039.05 356.21 V450.40 Z" fill="#6aa3dc"/>
<path d="M1041.05 450.40 V370.60 Q1041.05 368.60 1043.05 368.60 H1052.35 Q1054.35 368.60 1054.35 370.60 V450.40 Z" fill="#a3c6ea"/>
<path d="M1073.80 450.40 V351.56 Q1073.80 349.56 1075.80 349.56 H1085.50 Q1087.50 349.56 1087.50 351.56 V450.40 Z" fill="#6aa3dc"/>
<path d="M1089.50 450.40 V331.40 Q1089.50 329.40 1091.50 329.40 H1100.80 Q1102.80 329.40 1102.80 331.40 V450.40 Z" fill="#a3c6ea"/>
<path d="M1122.25 450.40 V341.71 Q1122.25 339.71 1124.25 339.71 H1133.95 Q1135.95 339.71 1135.95 341.71 V450.40 Z" fill="#6aa3dc"/>
<path d="M1137.95 450.40 V366.07 Q1137.95 364.07 1139.95 364.07 H1149.25 Q1151.25 364.07 1151.25 366.07 V450.40 Z" fill="#a3c6ea"/>
<path d="M1170.70 450.40 V367.54 Q1170.70 365.54 1172.70 365.54 H1182.40 Q1184.40 365.54 1184.40 367.54 V450.40 Z" fill="#6aa3dc"/>
<path d="M1186.40 450.40 V388.84 Q1186.40 386.84 1188.40 386.84 H1197.70 Q1199.70 386.84 1199.70 388.84 V450.40 Z" fill="#a3c6ea"/>
<path d="M1219.15 450.40 V369.92 Q1219.15 367.92 1221.15 367.92 H1230.85 Q1232.85 367.92 1232.85 369.92 V450.40 Z" fill="#6aa3dc"/>
<path d="M1234.85 450.40 V366.63 Q1234.85 364.63 1236.85 364.63 H1246.15 Q1248.15 364.63 1248.15 366.63 V450.40 Z" fill="#a3c6ea"/>
<text x="693.00" y="333.86" font-size="10.5" fill="#111" font-weight="bold" text-anchor="middle" stroke="#ffffff" stroke-width="2.2" paint-order="stroke" stroke-linejoin="round">92.0</text>
<text x="741.45" y="348.82" font-size="10.5" fill="#111" font-weight="bold" text-anchor="middle" stroke="#ffffff" stroke-width="2.2" paint-order="stroke" stroke-linejoin="round">78.8</text>
<text x="789.90" y="357.66" font-size="10.5" fill="#111" font-weight="bold" text-anchor="middle" stroke="#ffffff" stroke-width="2.2" paint-order="stroke" stroke-linejoin="round">71.0</text>
<text x="838.35" y="330.58" font-size="10.5" fill="#111" font-weight="bold" text-anchor="middle" stroke="#ffffff" stroke-width="2.2" paint-order="stroke" stroke-linejoin="round">94.9</text>
<text x="886.80" y="347.57" font-size="10.5" fill="#111" font-weight="bold" text-anchor="middle" stroke="#ffffff" stroke-width="2.2" paint-order="stroke" stroke-linejoin="round">79.9</text>
<text x="935.25" y="348.14" font-size="10.5" fill="#111" font-weight="bold" text-anchor="middle" stroke="#ffffff" stroke-width="2.2" paint-order="stroke" stroke-linejoin="round">79.4</text>
<text x="983.70" y="348.03" font-size="10.5" fill="#111" font-weight="bold" text-anchor="middle" stroke="#ffffff" stroke-width="2.2" paint-order="stroke" stroke-linejoin="round">79.5</text>
<text x="1032.15" y="341.91" font-size="10.5" fill="#111" font-weight="bold" text-anchor="middle" stroke="#ffffff" stroke-width="2.2" paint-order="stroke" stroke-linejoin="round">84.9</text>
<text x="1080.60" y="337.26" font-size="10.5" fill="#111" font-weight="bold" text-anchor="middle" stroke="#ffffff" stroke-width="2.2" paint-order="stroke" stroke-linejoin="round">89.0</text>
<text x="1129.05" y="327.41" font-size="10.5" fill="#111" font-weight="bold" text-anchor="middle" stroke="#ffffff" stroke-width="2.2" paint-order="stroke" stroke-linejoin="round">97.7</text>
<text x="1177.50" y="353.24" font-size="10.5" fill="#111" font-weight="bold" text-anchor="middle" stroke="#ffffff" stroke-width="2.2" paint-order="stroke" stroke-linejoin="round">74.9</text>
<text x="1225.95" y="355.62" font-size="10.5" fill="#111" font-weight="bold" text-anchor="middle" stroke="#ffffff" stroke-width="2.2" paint-order="stroke" stroke-linejoin="round">72.8</text>
<text x="708.60" y="353.55" font-size="10.5" fill="#0a1626" font-weight="bold" text-anchor="middle" stroke="#c9dcf0" stroke-width="2.2" paint-order="stroke" stroke-linejoin="round">96.6</text>
<text x="757.05" y="369.30" font-size="10.5" fill="#0a1626" font-weight="bold" text-anchor="middle" stroke="#c9dcf0" stroke-width="2.2" paint-order="stroke" stroke-linejoin="round">82.7</text>
<text x="805.50" y="362.39" font-size="10.5" fill="#0a1626" font-weight="bold" text-anchor="middle" stroke="#c9dcf0" stroke-width="2.2" paint-order="stroke" stroke-linejoin="round">88.8</text>
<text x="853.95" y="381.31" font-size="10.5" fill="#0a1626" font-weight="bold" text-anchor="middle" stroke="#c9dcf0" stroke-width="2.2" paint-order="stroke" stroke-linejoin="round">72.1</text>
<text x="902.40" y="366.13" font-size="10.5" fill="#0a1626" font-weight="bold" text-anchor="middle" stroke="#c9dcf0" stroke-width="2.2" paint-order="stroke" stroke-linejoin="round">85.5</text>
<text x="950.85" y="363.07" font-size="10.5" fill="#0a1626" font-weight="bold" text-anchor="middle" stroke="#c9dcf0" stroke-width="2.2" paint-order="stroke" stroke-linejoin="round">88.2</text>
<text x="999.30" y="374.74" font-size="10.5" fill="#0a1626" font-weight="bold" text-anchor="middle" stroke="#c9dcf0" stroke-width="2.2" paint-order="stroke" stroke-linejoin="round">77.9</text>
<text x="1047.75" y="381.20" font-size="10.5" fill="#0a1626" font-weight="bold" text-anchor="middle" stroke="#c9dcf0" stroke-width="2.2" paint-order="stroke" stroke-linejoin="round">72.2</text>
<text x="1096.20" y="342.00" font-size="10.5" fill="#0a1626" font-weight="bold" text-anchor="middle" stroke="#c9dcf0" stroke-width="2.2" paint-order="stroke" stroke-linejoin="round">106.8</text>
<text x="1144.65" y="376.67" font-size="10.5" fill="#0a1626" font-weight="bold" text-anchor="middle" stroke="#c9dcf0" stroke-width="2.2" paint-order="stroke" stroke-linejoin="round">76.2</text>
<text x="1193.10" y="399.44" font-size="10.5" fill="#0a1626" font-weight="bold" text-anchor="middle" stroke="#c9dcf0" stroke-width="2.2" paint-order="stroke" stroke-linejoin="round">56.1</text>
<text x="1241.55" y="377.23" font-size="10.5" fill="#0a1626" font-weight="bold" text-anchor="middle" stroke="#c9dcf0" stroke-width="2.2" paint-order="stroke" stroke-linejoin="round">75.7</text>
<text x="701.00" y="464.00" font-size="10.5" fill="#111" font-weight="bold" text-anchor="middle" >Jan</text>
<text x="749.45" y="464.00" font-size="10.5" fill="#111" font-weight="bold" text-anchor="middle" >Feb</text>
<text x="797.90" y="464.00" font-size="10.5" fill="#111" font-weight="bold" text-anchor="middle" >Mar</text>
<text x="846.35" y="464.00" font-size="10.5" fill="#111" font-weight="bold" text-anchor="middle" >Apr</text>
<text x="894.80" y="464.00" font-size="10.5" fill="#111" font-weight="bold" text-anchor="middle" >May</text>
<text x="943.25" y="464.00" font-size="10.5" fill="#111" font-weight="bold" text-anchor="middle" >Jun</text>
<text x="991.70" y="464.00" font-size="10.5" fill="#111" font-weight="bold" text-anchor="middle" >Jul</text>
<text x="1040.15" y="464.00" font-size="10.5" fill="#111" font-weight="bold" text-anchor="middle" >Aug</text>
<text x="1088.60" y="464.00" font-size="10.5" fill="#111" font-weight="bold" text-anchor="middle" >Sep</text>
<text x="1137.05" y="464.00" font-size="10.5" fill="#111" font-weight="bold" text-anchor="middle" >Oct</text>
<text x="1185.50" y="464.00" font-size="10.5" fill="#111" font-weight="bold" text-anchor="middle" >Nov</text>
<text x="1233.95" y="464.00" font-size="10.5" fill="#111" font-weight="bold" text-anchor="middle" >Dec</text>
<rect x="911.60" y="474.00" width="9.90" height="9.60" fill="#6aa3dc" />
<text x="928.00" y="482.30" font-size="10.5" fill="#111" font-weight="bold" text-anchor="start" >Actual</text>
<rect x="973.60" y="474.00" width="9.40" height="9.60" fill="#a3c6ea" />
<text x="989.60" y="482.30" font-size="10.5" fill="#111" font-weight="bold" text-anchor="start" >PY</text>
<rect x="50.50" y="502.50" width="580.00" height="197.50" fill="#ffffff" stroke="#a0acbb" stroke-width="1"/>
<text x="340.90" y="524.40" font-size="12.8" fill="#000" font-weight="bold" text-anchor="middle"  textLength="126.6" lengthAdjust="spacingAndGlyphs">Target Vs Actual (YTD)</text>
<text x="88.00" y="621.96" font-size="10.5" fill="#404040" font-weight="normal" text-anchor="end" >50.0</text>
<text x="88.00" y="582.84" font-size="10.5" fill="#404040" font-weight="normal" text-anchor="end" >75.0</text>
<text x="88.00" y="543.72" font-size="10.5" fill="#404040" font-weight="normal" text-anchor="end" >100.0</text>
<path d="M122.30 545.40 C129.38 549.20 150.63 567.72 164.80 568.24 C178.97 568.76 193.13 552.15 207.30 548.53 C221.47 544.90 235.63 545.71 249.80 546.49 C263.97 547.27 278.13 544.61 292.30 553.22 C306.47 561.83 320.63 599.30 334.80 598.13 C348.97 596.96 363.13 549.18 377.30 546.18 C391.47 543.18 405.63 574.22 419.80 580.14 C433.97 586.06 448.13 583.97 462.30 581.70 C476.47 579.43 490.63 563.81 504.80 566.52 C518.97 569.23 533.13 600.97 547.30 597.97 C561.47 594.97 582.72 556.77 589.80 548.53" fill="none" stroke="#c47e58" stroke-width="1.8" stroke-dasharray="0.01 4.2" stroke-linecap="round"/>
<path d="M107.80 696.40 V554.44 Q107.80 552.44 109.80 552.44 H134.80 Q136.80 552.44 136.80 554.44 V696.40 Z" fill="#5f9cd9" fill-opacity="0.9"/>
<path d="M150.30 696.40 V564.77 Q150.30 562.77 152.30 562.77 H177.30 Q179.30 562.77 179.30 564.77 V696.40 Z" fill="#5f9cd9" fill-opacity="0.9"/>
<path d="M192.80 696.40 V572.28 Q192.80 570.28 194.80 570.28 H219.80 Q221.80 570.28 221.80 572.28 V696.40 Z" fill="#5f9cd9" fill-opacity="0.9"/>
<path d="M235.30 696.40 V566.64 Q235.30 564.64 237.30 564.64 H262.30 Q264.30 564.64 264.30 566.64 V696.40 Z" fill="#5f9cd9" fill-opacity="0.9"/>
<path d="M277.80 696.40 V568.05 Q277.80 566.05 279.80 566.05 H304.80 Q306.80 566.05 306.80 568.05 V696.40 Z" fill="#5f9cd9" fill-opacity="0.9"/>
<path d="M320.30 696.40 V568.99 Q320.30 566.99 322.30 566.99 H347.30 Q349.30 566.99 349.30 568.99 V696.40 Z" fill="#5f9cd9" fill-opacity="0.9"/>
<path d="M362.80 696.40 V569.77 Q362.80 567.77 364.80 567.77 H389.80 Q391.80 567.77 391.80 569.77 V696.40 Z" fill="#5f9cd9" fill-opacity="0.9"/>
<path d="M405.30 696.40 V569.15 Q405.30 567.15 407.30 567.15 H432.30 Q434.30 567.15 434.30 569.15 V696.40 Z" fill="#5f9cd9" fill-opacity="0.9"/>
<path d="M447.80 696.40 V568.05 Q447.80 566.05 449.80 566.05 H474.80 Q476.80 566.05 476.80 568.05 V696.40 Z" fill="#5f9cd9" fill-opacity="0.9"/>
<path d="M490.30 696.40 V565.86 Q490.30 563.86 492.30 563.86 H517.30 Q519.30 563.86 519.30 565.86 V696.40 Z" fill="#5f9cd9" fill-opacity="0.9"/>
<path d="M532.80 696.40 V567.27 Q532.80 565.27 534.80 565.27 H559.80 Q561.80 565.27 561.80 567.27 V696.40 Z" fill="#5f9cd9" fill-opacity="0.9"/>
<path d="M575.30 696.40 V568.68 Q575.30 566.68 577.30 566.68 H602.30 Q604.30 566.68 604.30 568.68 V696.40 Z" fill="#5f9cd9" fill-opacity="0.9"/>
<text x="122.30" y="564.94" font-size="10.5" fill="#ffffff" font-weight="bold" text-anchor="middle" stroke="#ffffff" stroke-width="0.3">92.0</text>
<text x="164.80" y="575.27" font-size="10.5" fill="#ffffff" font-weight="bold" text-anchor="middle" stroke="#ffffff" stroke-width="0.3">85.4</text>
<text x="207.30" y="582.78" font-size="10.5" fill="#ffffff" font-weight="bold" text-anchor="middle" stroke="#ffffff" stroke-width="0.3">80.6</text>
<text x="249.80" y="577.14" font-size="10.5" fill="#ffffff" font-weight="bold" text-anchor="middle" stroke="#ffffff" stroke-width="0.3">84.2</text>
<text x="292.30" y="578.55" font-size="10.5" fill="#ffffff" font-weight="bold" text-anchor="middle" stroke="#ffffff" stroke-width="0.3">83.3</text>
<text x="334.80" y="579.49" font-size="10.5" fill="#ffffff" font-weight="bold" text-anchor="middle" stroke="#ffffff" stroke-width="0.3">82.7</text>
<text x="377.30" y="580.27" font-size="10.5" fill="#ffffff" font-weight="bold" text-anchor="middle" stroke="#ffffff" stroke-width="0.3">82.2</text>
<text x="419.80" y="579.65" font-size="10.5" fill="#ffffff" font-weight="bold" text-anchor="middle" stroke="#ffffff" stroke-width="0.3">82.6</text>
<text x="462.30" y="578.55" font-size="10.5" fill="#ffffff" font-weight="bold" text-anchor="middle" stroke="#ffffff" stroke-width="0.3">83.3</text>
<text x="504.80" y="576.36" font-size="10.5" fill="#ffffff" font-weight="bold" text-anchor="middle" stroke="#ffffff" stroke-width="0.3">84.7</text>
<text x="547.30" y="577.77" font-size="10.5" fill="#ffffff" font-weight="bold" text-anchor="middle" stroke="#ffffff" stroke-width="0.3">83.8</text>
<text x="589.80" y="579.18" font-size="10.5" fill="#ffffff" font-weight="bold" text-anchor="middle" stroke="#ffffff" stroke-width="0.3">82.9</text>
<text x="164.80" y="553.44" font-size="10.5" fill="#000" font-weight="bold" text-anchor="middle" stroke="#ffffff" stroke-width="2.2" paint-order="stroke" stroke-linejoin="round">81.9</text>
<text x="334.80" y="583.93" font-size="10.5" fill="#000" font-weight="bold" text-anchor="middle" stroke="#ffffff" stroke-width="3" paint-order="stroke" stroke-linejoin="round">62.8</text>
<text x="419.80" y="565.34" font-size="10.5" fill="#000" font-weight="bold" text-anchor="middle" stroke="#ffffff" stroke-width="2.2" paint-order="stroke" stroke-linejoin="round">74.3</text>
<text x="462.30" y="566.90" font-size="10.5" fill="#000" font-weight="bold" text-anchor="middle" stroke="#ffffff" stroke-width="2.2" paint-order="stroke" stroke-linejoin="round">73.3</text>
<text x="504.80" y="551.72" font-size="10.5" fill="#000" font-weight="bold" text-anchor="middle" stroke="#ffffff" stroke-width="2.2" paint-order="stroke" stroke-linejoin="round">83.0</text>
<text x="547.30" y="583.77" font-size="10.5" fill="#000" font-weight="bold" text-anchor="middle" stroke="#ffffff" stroke-width="3" paint-order="stroke" stroke-linejoin="round">62.9</text>
<rect x="640.50" y="502.50" width="636.00" height="197.50" fill="#ffffff" stroke="#a0acbb" stroke-width="1"/>
<text x="958.30" y="524.40" font-size="12.8" fill="#000" font-weight="bold" text-anchor="middle"  textLength="108.9" lengthAdjust="spacingAndGlyphs">Actual Vs PY (YTD)</text>
<text x="678.20" y="621.96" font-size="10.5" fill="#404040" font-weight="normal" text-anchor="end" >50.0</text>
<text x="678.20" y="582.84" font-size="10.5" fill="#404040" font-weight="normal" text-anchor="end" >75.0</text>
<text x="678.20" y="543.72" font-size="10.5" fill="#404040" font-weight="normal" text-anchor="end" >100.0</text>
<path d="M700.30 696.40 V554.44 Q700.30 552.44 702.30 552.44 H713.30 Q715.30 552.44 715.30 554.44 V696.40 Z" fill="#6aa3dc"/>
<path d="M716.10 696.40 V571.81 Q716.10 569.81 718.10 569.81 H728.00 Q730.00 569.81 730.00 571.81 V696.40 Z" fill="#a3c6ea"/>
<path d="M747.42 696.40 V564.77 Q747.42 562.77 749.42 562.77 H760.42 Q762.42 562.77 762.42 564.77 V696.40 Z" fill="#6aa3dc"/>
<path d="M763.22 696.40 V598.25 Q763.22 596.25 765.22 596.25 H775.12 Q777.12 596.25 777.12 598.25 V696.40 Z" fill="#a3c6ea"/>
<path d="M794.54 696.40 V572.28 Q794.54 570.28 796.54 570.28 H807.54 Q809.54 570.28 809.54 572.28 V696.40 Z" fill="#6aa3dc"/>
<path d="M810.34 696.40 V597.47 Q810.34 595.47 812.34 595.47 H822.24 Q824.24 595.47 824.24 597.47 V696.40 Z" fill="#a3c6ea"/>
<path d="M841.66 696.40 V566.64 Q841.66 564.64 843.66 564.64 H854.66 Q856.66 564.64 856.66 566.64 V696.40 Z" fill="#6aa3dc"/>
<path d="M857.46 696.40 V562.73 Q857.46 560.73 859.46 560.73 H869.36 Q871.36 560.73 871.36 562.73 V696.40 Z" fill="#a3c6ea"/>
<path d="M888.78 696.40 V568.05 Q888.78 566.05 890.78 566.05 H901.78 Q903.78 566.05 903.78 568.05 V696.40 Z" fill="#6aa3dc"/>
<path d="M904.58 696.40 V548.49 Q904.58 546.49 906.58 546.49 H916.48 Q918.48 546.49 918.48 548.49 V696.40 Z" fill="#a3c6ea"/>
<path d="M935.90 696.40 V568.99 Q935.90 566.99 937.90 566.99 H948.90 Q950.90 566.99 950.90 568.99 V696.40 Z" fill="#6aa3dc"/>
<path d="M951.70 696.40 V566.49 Q951.70 564.49 953.70 564.49 H963.60 Q965.60 564.49 965.60 566.49 V696.40 Z" fill="#a3c6ea"/>
<path d="M983.02 696.40 V569.77 Q983.02 567.77 985.02 567.77 H996.02 Q998.02 567.77 998.02 569.77 V696.40 Z" fill="#6aa3dc"/>
<path d="M998.82 696.40 V546.61 Q998.82 544.61 1000.82 544.61 H1010.72 Q1012.72 544.61 1012.72 546.61 V696.40 Z" fill="#a3c6ea"/>
<path d="M1030.14 696.40 V569.15 Q1030.14 567.15 1032.14 567.15 H1043.14 Q1045.14 567.15 1045.14 569.15 V696.40 Z" fill="#6aa3dc"/>
<path d="M1045.94 696.40 V592.46 Q1045.94 590.46 1047.94 590.46 H1057.84 Q1059.84 590.46 1059.84 592.46 V696.40 Z" fill="#a3c6ea"/>
<path d="M1077.26 696.40 V568.05 Q1077.26 566.05 1079.26 566.05 H1090.26 Q1092.26 566.05 1092.26 568.05 V696.40 Z" fill="#6aa3dc"/>
<path d="M1093.06 696.40 V544.58 Q1093.06 542.58 1095.06 542.58 H1104.96 Q1106.96 542.58 1106.96 544.58 V696.40 Z" fill="#a3c6ea"/>
<path d="M1124.38 696.40 V565.86 Q1124.38 563.86 1126.38 563.86 H1137.38 Q1139.38 563.86 1139.38 565.86 V696.40 Z" fill="#6aa3dc"/>
<path d="M1140.18 696.40 V589.65 Q1140.18 587.65 1142.18 587.65 H1152.08 Q1154.08 587.65 1154.08 589.65 V696.40 Z" fill="#a3c6ea"/>
<path d="M1171.50 696.40 V567.27 Q1171.50 565.27 1173.50 565.27 H1184.50 Q1186.50 565.27 1186.50 567.27 V696.40 Z" fill="#6aa3dc"/>
<path d="M1187.30 696.40 V577.75 Q1187.30 575.75 1189.30 575.75 H1199.20 Q1201.20 575.75 1201.20 577.75 V696.40 Z" fill="#a3c6ea"/>
<path d="M1218.62 696.40 V568.68 Q1218.62 566.68 1220.62 566.68 H1231.62 Q1233.62 566.68 1233.62 568.68 V696.40 Z" fill="#6aa3dc"/>
<path d="M1234.42 696.40 V584.17 Q1234.42 582.17 1236.42 582.17 H1246.32 Q1248.32 582.17 1248.32 584.17 V696.40 Z" fill="#a3c6ea"/>
<text x="708.10" y="539.84" font-size="10.5" fill="#111" font-weight="bold" text-anchor="middle" stroke="#ffffff" stroke-width="2.2" paint-order="stroke" stroke-linejoin="round">92.0</text>
<text x="755.22" y="550.17" font-size="10.5" fill="#111" font-weight="bold" text-anchor="middle" stroke="#ffffff" stroke-width="2.2" paint-order="stroke" stroke-linejoin="round">85.4</text>
<text x="802.34" y="557.68" font-size="10.5" fill="#111" font-weight="bold" text-anchor="middle" stroke="#ffffff" stroke-width="2.2" paint-order="stroke" stroke-linejoin="round">80.6</text>
<text x="849.46" y="552.04" font-size="10.5" fill="#111" font-weight="bold" text-anchor="middle" stroke="#ffffff" stroke-width="2.2" paint-order="stroke" stroke-linejoin="round">84.2</text>
<text x="896.58" y="553.45" font-size="10.5" fill="#111" font-weight="bold" text-anchor="middle" stroke="#ffffff" stroke-width="2.2" paint-order="stroke" stroke-linejoin="round">83.3</text>
<text x="943.70" y="554.39" font-size="10.5" fill="#111" font-weight="bold" text-anchor="middle" stroke="#ffffff" stroke-width="2.2" paint-order="stroke" stroke-linejoin="round">82.7</text>
<text x="990.82" y="555.17" font-size="10.5" fill="#111" font-weight="bold" text-anchor="middle" stroke="#ffffff" stroke-width="2.2" paint-order="stroke" stroke-linejoin="round">82.2</text>
<text x="1037.94" y="554.55" font-size="10.5" fill="#111" font-weight="bold" text-anchor="middle" stroke="#ffffff" stroke-width="2.2" paint-order="stroke" stroke-linejoin="round">82.6</text>
<text x="1085.06" y="553.45" font-size="10.5" fill="#111" font-weight="bold" text-anchor="middle" stroke="#ffffff" stroke-width="2.2" paint-order="stroke" stroke-linejoin="round">83.3</text>
<text x="1132.18" y="551.26" font-size="10.5" fill="#111" font-weight="bold" text-anchor="middle" stroke="#ffffff" stroke-width="2.2" paint-order="stroke" stroke-linejoin="round">84.7</text>
<text x="1179.30" y="552.67" font-size="10.5" fill="#111" font-weight="bold" text-anchor="middle" stroke="#ffffff" stroke-width="2.2" paint-order="stroke" stroke-linejoin="round">83.8</text>
<text x="1226.42" y="554.08" font-size="10.5" fill="#111" font-weight="bold" text-anchor="middle" stroke="#ffffff" stroke-width="2.2" paint-order="stroke" stroke-linejoin="round">82.9</text>
<text x="723.00" y="581.81" font-size="10.5" fill="#0a1626" font-weight="bold" text-anchor="middle" stroke="#c9dcf0" stroke-width="2.2" paint-order="stroke" stroke-linejoin="round">80.9</text>
<text x="770.12" y="608.25" font-size="10.5" fill="#0a1626" font-weight="bold" text-anchor="middle" stroke="#c9dcf0" stroke-width="2.2" paint-order="stroke" stroke-linejoin="round">64.0</text>
<text x="817.24" y="607.47" font-size="10.5" fill="#0a1626" font-weight="bold" text-anchor="middle" stroke="#c9dcf0" stroke-width="2.2" paint-order="stroke" stroke-linejoin="round">64.5</text>
<text x="864.36" y="572.73" font-size="10.5" fill="#0a1626" font-weight="bold" text-anchor="middle" stroke="#c9dcf0" stroke-width="2.2" paint-order="stroke" stroke-linejoin="round">86.7</text>
<text x="911.48" y="558.49" font-size="10.5" fill="#0a1626" font-weight="bold" text-anchor="middle" stroke="#c9dcf0" stroke-width="2.2" paint-order="stroke" stroke-linejoin="round">95.8</text>
<text x="958.60" y="576.49" font-size="10.5" fill="#0a1626" font-weight="bold" text-anchor="middle" stroke="#c9dcf0" stroke-width="2.2" paint-order="stroke" stroke-linejoin="round">84.3</text>
<text x="1005.72" y="556.61" font-size="10.5" fill="#0a1626" font-weight="bold" text-anchor="middle" stroke="#c9dcf0" stroke-width="2.2" paint-order="stroke" stroke-linejoin="round">97.0</text>
<text x="1052.84" y="602.46" font-size="10.5" fill="#0a1626" font-weight="bold" text-anchor="middle" stroke="#c9dcf0" stroke-width="2.2" paint-order="stroke" stroke-linejoin="round">67.7</text>
<text x="1099.96" y="554.58" font-size="10.5" fill="#0a1626" font-weight="bold" text-anchor="middle" stroke="#c9dcf0" stroke-width="2.2" paint-order="stroke" stroke-linejoin="round">98.3</text>
<text x="1147.08" y="599.65" font-size="10.5" fill="#0a1626" font-weight="bold" text-anchor="middle" stroke="#c9dcf0" stroke-width="2.2" paint-order="stroke" stroke-linejoin="round">69.5</text>
<text x="1194.20" y="587.75" font-size="10.5" fill="#0a1626" font-weight="bold" text-anchor="middle" stroke="#c9dcf0" stroke-width="2.2" paint-order="stroke" stroke-linejoin="round">77.1</text>
<text x="1241.32" y="594.17" font-size="10.5" fill="#0a1626" font-weight="bold" text-anchor="middle" stroke="#c9dcf0" stroke-width="2.2" paint-order="stroke" stroke-linejoin="round">73.0</text>
<rect x="0.00" y="647.20" width="1280.00" height="8.80" fill="#ffffff" />
<rect x="0.00" y="647.20" width="38.50" height="8.80" fill="#f3f3f3" />
<line x1="0.00" y1="647.40" x2="1280.00" y2="647.40" stroke="#e3e3e3" stroke-width="1" />
<line x1="38.50" y1="647.20" x2="38.50" y2="656.00" stroke="#c7c7c7" stroke-width="1" />
<line x1="1277.50" y1="255.00" x2="1277.50" y2="497.00" stroke="#7f8c9c" stroke-width="1" />
<line x1="1278.00" y1="302.90" x2="1280.00" y2="302.90" stroke="#56708f" stroke-width="1.6" />
<line x1="1278.00" y1="320.30" x2="1280.00" y2="320.30" stroke="#56708f" stroke-width="1.6" />
</svg>
</body></html>
